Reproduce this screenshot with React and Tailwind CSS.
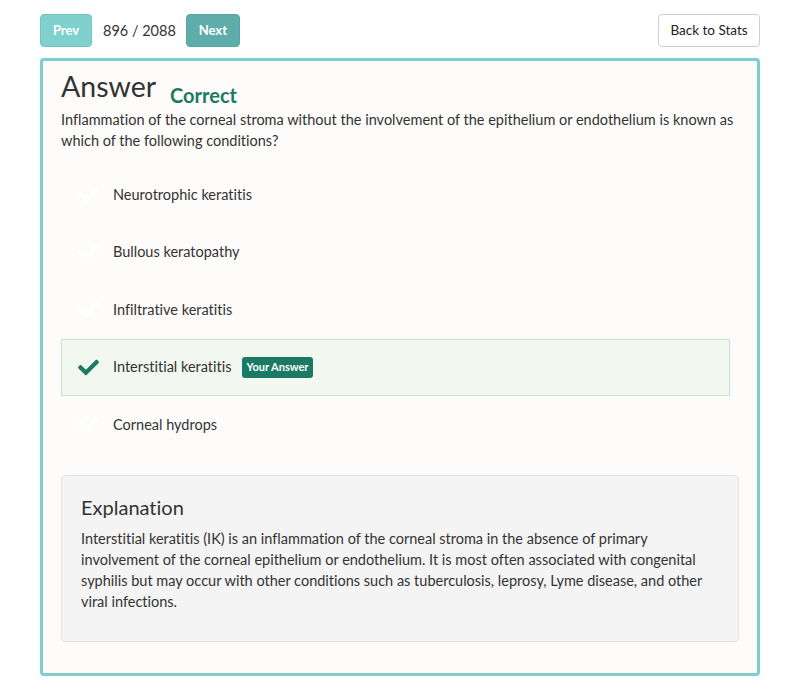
import React from "react";
import { FaCheck } from "react-icons/fa";

const options = [
  "Neurotrophic keratitis",
  "Bullous keratopathy",
  "Infiltrative keratitis",
  "Interstitial keratitis",
  "Corneal hydrops",
];
const picked = 3;

const App = () => {
  return (
    <div className="min-h-[700px] bg-white text-[#333] font-['Lato','Liberation_Sans',sans-serif] [font-variant-ligatures:none]">
      <div className="w-[720px] ml-[40px] pt-[14px]">
        <div className="flex flex-row items-center justify-between">
          <div className="flex flex-row items-center">
            <button className="h-[33px] w-[52px] rounded-[4px] bg-[#80d0cd] border border-[#74c4c1] text-white text-[13px] font-bold">
              Prev
            </button>
            <span className="ml-[11px] text-[14.5px] text-[#333]">896 / 2088</span>
            <button className="ml-[10px] h-[33px] w-[54px] rounded-[4px] bg-[#5fadaa] border border-[#57a4a1] text-white text-[13px] font-bold">
              Next
            </button>
          </div>
          <button className="h-[33px] w-[102px] rounded-[4px] bg-white border border-[#cfcfcf] text-[13.5px] text-[#222]">
            Back to Stats
          </button>
        </div>

        <div className="mt-[11px] border-[3px] border-[#7ecfcc] rounded-[4px] bg-[#fdfcfa] px-[18px] pt-[7px] pb-[31px]">
          <div className="flex flex-row items-end">
            <h1 className="text-[28.5px] leading-[36px] text-[#333]">Answer</h1>
            <span className="ml-[14px] mb-[-6px] text-[20px] leading-[30px] font-bold text-[#1b7a64]">Correct</span>
          </div>
          <p className="mt-[5px] text-[14.5px] leading-[21px] text-[#333]">
            Inflammation of the corneal stroma without the involvement of the epithelium or endothelium is known as
            which of the following conditions?
          </p>

          <div className="mt-[15px] mr-[9px] flex flex-col">
            {options.map((opt, i) => {
              const sel = i === picked;
              return (
                <div
                  key={opt}
                  className={
                    sel
                      ? "flex flex-row items-center h-[57.5px] border border-[#c9e6c3] bg-[#f2f8ef] pl-[16px]"
                      : "flex flex-row items-center h-[57.5px] border border-transparent pl-[16px]"
                  }
                >
                  <FaCheck
                    className={sel ? "text-[#1b7a64] text-[21px]" : "text-white text-[21px]"}
                  />
                  <span className="ml-[14px] text-[14.5px]">{opt}</span>
                  {sel && (
                    <span className="ml-[10px] rounded-[3px] bg-[#1b7a64] px-[5px] py-[2px] text-[11px] font-bold text-white">
                      Your Answer
                    </span>
                  )}
                </div>
              );
            })}
          </div>

          <div className="mt-[21px] rounded-[4px] border border-[#e3e3e3] bg-[#f4f4f4] px-[19px] pt-[19px] pb-[29px]">
            <h2 className="text-[20px] leading-[24px] text-[#333]">Explanation</h2>
            <p className="mt-[9px] text-[14.5px] leading-[21px] text-[#333]">
              Interstitial keratitis (IK) is an inflammation of the corneal stroma in the absence of primary
              involvement of the corneal epithelium or endothelium. It is most often associated with congenital
              syphilis but may occur with other conditions such as tuberculosis, leprosy, Lyme disease, and other
              viral infections.
            </p>
          </div>
        </div>
      </div>
    </div>
  );
};

export default App;
